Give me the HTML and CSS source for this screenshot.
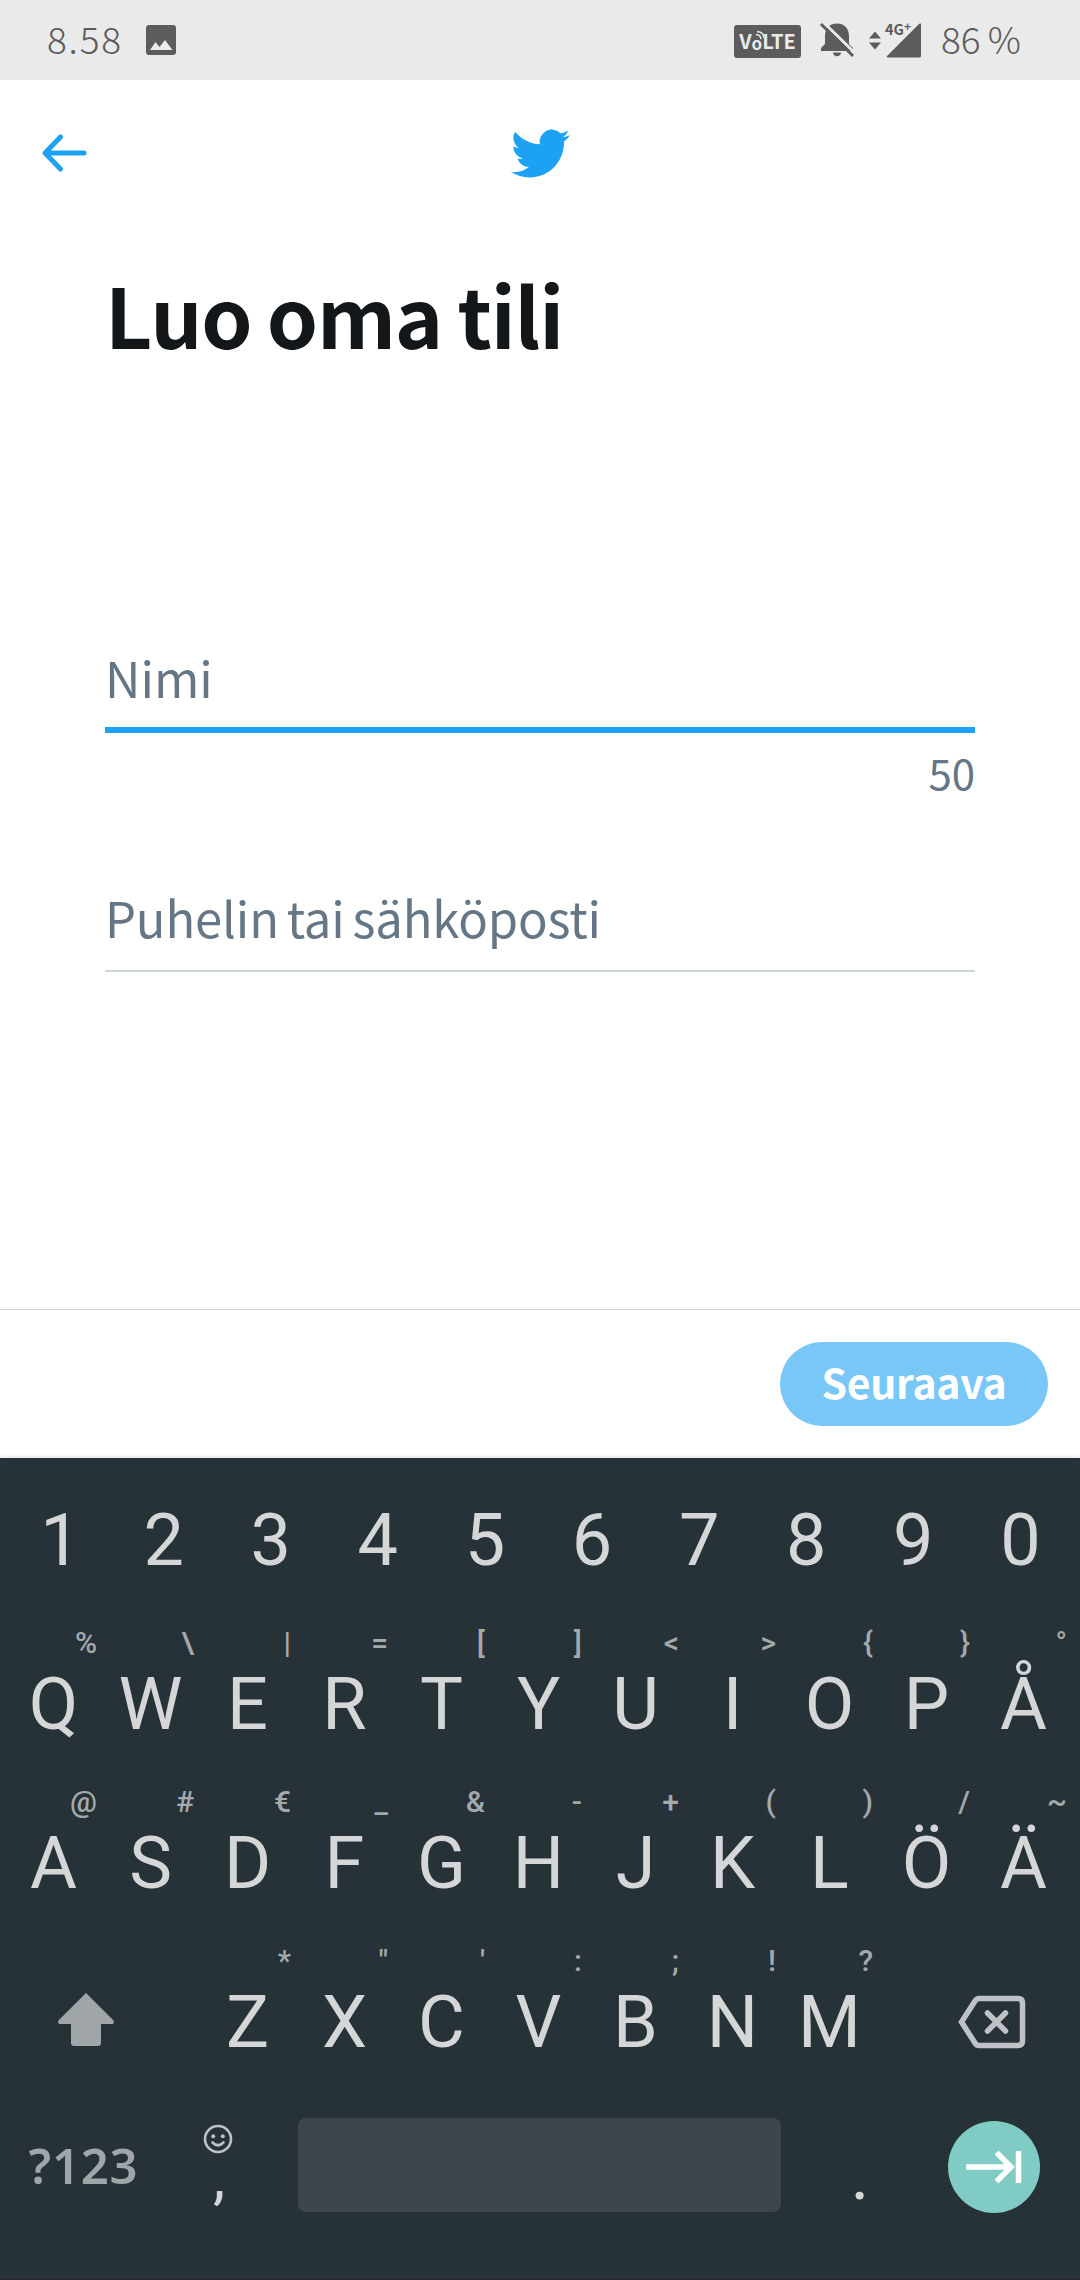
FILE: index.html
```html
<!DOCTYPE html>
<html lang="fi">
<head>
<meta charset="utf-8">
<title>Luo oma tili</title>
<link rel="stylesheet" href="styles.css">
</head>
<body>
<div class="screen">
  <div class="status">
    <span class="clock">8.58</span>
    <svg class="photo" width="30" height="30" viewBox="0 0 30 30"><rect width="30" height="30" rx="3"/><path class="cut" d="M4 25 9.500 17l4 5L19 15l7.500 10z"/></svg>
    <div class="status-right">
      <span class="volte">V<span class="volte-o">o<svg width="8" height="9" viewBox="0 0 8 9"><path d="M0 4q4-1 5 4M1 .8q6-.3 7 6"/></svg></span>LTE</span>
      <svg class="bell" width="36" height="36" viewBox="0 0 36 36"><path d="M2 29v-3l4-4V14C6 6 11 1.500 18 1.500S30 6 30 14v8l4 4v3zM14 30.500h8c0 5-8 5-8 0z"/><path class="gap" d="M3-1 37 32"/><path class="slash" d="M2 2 34 34"/></svg>
      <div class="signal">
        <svg width="54" height="36" viewBox="0 0 54 36"><path d="M1 16.500 7 9.500l6 7zM1 20.500h12l-6 7zM53 2.500V34a1.500 1.500 0 0 1-1.500 1.500H20c-1.500 0-1.500-1-.7-1.800L51 2c.8-.8 2-.8 2 .500z"/></svg>
        <span class="network">4G<sup>+</sup></span>
      </div>
      <span class="battery">86 %</span>
    </div>
  </div>

  <header class="topbar">
    <svg class="back" width="46" height="40" viewBox="0 0 46 40"><path d="M43 20H4.500M19.500 4 4 20l15.500 16"/></svg>
    <svg class="bird" width="59" height="59" viewBox="0 0 24 24"><path d="M23.953 4.570a10 10 0 0 1-2.825.775 4.958 4.958 0 0 0 2.163-2.723c-.951.555-2.005.959-3.127 1.184a4.920 4.920 0 0 0-8.384 4.482C7.690 8.095 4.067 6.130 1.640 3.162a4.822 4.822 0 0 0-.666 2.475c0 1.710.870 3.213 2.188 4.096a4.904 4.904 0 0 1-2.228-.616v.060a4.923 4.923 0 0 0 3.946 4.827 4.996 4.996 0 0 1-2.212.085 4.936 4.936 0 0 0 4.604 3.417 9.867 9.867 0 0 1-6.102 2.105c-.390 0-.779-.023-1.170-.067a13.995 13.995 0 0 0 7.557 2.209c9.053 0 13.998-7.496 13.998-13.985 0-.210 0-.420-.015-.630A9.935 9.935 0 0 0 24 4.590z"/></svg>
  </header>

  <main class="form">
    <h1>Luo oma tili</h1>
    <div class="field active">Nimi</div>
    <div class="counter">50</div>
    <div class="field"><span class="long">Puhelin tai sähköposti</span></div>
  </main>

  <footer class="actions"><button class="next">Seuraava</button></footer>

  <div class="keyboard">
    <div class="row digits">
      <div class="key one">1</div><div class="key">2</div><div class="key">3</div><div class="key">4</div><div class="key">5</div><div class="key">6</div><div class="key">7</div><div class="key">8</div><div class="key">9</div><div class="key">0</div>
    </div>
    <div class="row letters">
      <div class="key">Q<i>%</i></div><div class="key">W<i>\</i></div><div class="key">E<i>|</i></div><div class="key">R<i>=</i></div><div class="key">T<i>[</i></div><div class="key">Y<i>]</i></div><div class="key">U<i>&lt;</i></div><div class="key">I<i>&gt;</i></div><div class="key">O<i>{</i></div><div class="key">P<i>}</i></div><div class="key">Å<i>°</i></div>
    </div>
    <div class="row letters">
      <div class="key">A<i>@</i></div><div class="key">S<i>#</i></div><div class="key">D<i>€</i></div><div class="key">F<i>_</i></div><div class="key">G<i>&amp;</i></div><div class="key">H<i>-</i></div><div class="key">J<i>+</i></div><div class="key">K<i>(</i></div><div class="key">L<i>)</i></div><div class="key">Ö<i>/</i></div><div class="key">Ä<i>~</i></div>
    </div>
    <div class="row letters">
      <div class="key shift"><svg width="58" height="54" viewBox="0 0 58 54"><path d="M29 1 56.300 28.300c1.200 1.500.5 3.700-1.500 3.700H44v19a3 3 0 0 1-3 3H17a3 3 0 0 1-3-3V32H3.200C1.200 32 .5 29.800 1.700 28.300z"/></svg></div>
      <div class="key">Z<i>*</i></div><div class="key">X<i>"</i></div><div class="key">C<i>'</i></div><div class="key">V<i>:</i></div><div class="key">B<i>;</i></div><div class="key">N<i>!</i></div><div class="key">M<i>?</i></div>
      <div class="key erase"><svg width="68" height="54" viewBox="0 0 68 54"><path d="M21 3.500H60q4.500 0 4.500 4.500V46q0 4.500-4.500 4.500H21q-2.500 0-4-2.500L3.500 27 17 6q1.500-2.500 4-2.500zM29.500 18l18 18M47.500 18l-18 18"/></svg></div>
    </div>
    <div class="row bottom">
      <div class="symbols">?123</div>
      <div class="comma"><svg width="30" height="30" viewBox="0 0 30 30"><circle class="ring" cx="15" cy="15" r="13"/><circle cx="10.200" cy="12.200" r="2"/><circle cx="19.800" cy="12.200" r="2"/><path class="ring" d="M9.500 18.500q5.500 5.500 11 0"/></svg><span>,</span></div>
      <div class="space"></div>
      <div class="period">.</div>
      <div class="tab"><svg width="56" height="36" viewBox="0 0 56 36"><path d="M0 18h44M30.500 3.500 45 18 30.500 32.500M52.500 2v32"/></svg></div>
    </div>
  </div>
</div>
</body>
</html>
```

FILE: styles.css
```css
* { box-sizing: border-box; }

body {
  margin: 0;
  font-family: "Noto Sans CJK SC", "Noto Sans", sans-serif;
}

.screen {
  width: 1080px;
  height: 2280px;
  display: flex;
  flex-direction: column;
  background: #fff;
  overflow: hidden;
}

/* Status bar */
.status {
  height: 80px;
  padding: 0 59px 0 47px;
  display: flex;
  align-items: center;
  background: #eaeaea;
  color: #5c5c5c;
  fill: #5c5c5c;
}

.clock,
.battery {
  font-size: 37px;
  font-weight: 300;
  line-height: 50px;
  padding-bottom: 5px;
  white-space: nowrap;
}

.clock { width: 99px; letter-spacing: 1.8px; }
.battery { width: 80px; word-spacing: -1px; }
.photo .cut { fill: #eaeaea; }

.status-right {
  margin-left: auto;
  display: flex;
  align-items: center;
}

.volte {
  width: 67px;
  height: 33px;
  margin: 2px 18px 0 0;
  padding-bottom: 2px;
  display: flex;
  align-items: center;
  justify-content: center;
  border-radius: 3px;
  background: #5c5c5c;
  color: #eaeaea;
  font: 700 20px/31px "Noto Sans CJK SC", sans-serif;
}

.volte-o {
  position: relative;
  font-size: 17px;
  padding-top: 4px;
}

.volte-o svg {
  position: absolute;
  left: 4px;
  top: 8px;
  fill: none;
  stroke: #eaeaea;
  stroke-width: 1.5;
}

.bell { margin-right: 13px; }
.bell .gap { stroke: #eaeaea; stroke-width: 3; }
.bell .slash { stroke: #5c5c5c; stroke-width: 3; }

.signal {
  position: relative;
  display: flex;
  margin-right: 19px;
}

.network {
  position: absolute;
  left: 17px;
  top: -1px;
  font: 700 14.5px/16px "Noto Sans CJK SC", sans-serif;
}

.network sup {
  font-size: 12px;
  line-height: 0;
  vertical-align: 4px;
}

/* Header */
.topbar {
  height: 147px;
  padding: 0 41px 1px;
  display: grid;
  grid-template-columns: 1fr auto 1fr;
  align-items: center;
}

.back {
  fill: none;
  stroke: #1da1f2;
  stroke-width: 5;
  stroke-linecap: round;
  stroke-linejoin: round;
}

.bird { fill: #1da1f2; }

/* Form */
.form {
  flex: 1;
  padding: 37px 105px 0;
}

h1 {
  margin: 0 0 283px;
  font-size: 82px;
  font-weight: 700;
  line-height: 100px;
  letter-spacing: -1.2px;
  word-spacing: -2px;
  color: #14171a;
  white-space: nowrap;
}

.field {
  height: 85px;
  border-bottom: 2px solid #ccd6dd;
  color: #657786;
  font-size: 49px;
  line-height: 60px;
  white-space: nowrap;
}

.field.active {
  height: 86px;
  border-bottom: 6px solid #1da1f2;
}

.long {
  letter-spacing: -0.15px;
  word-spacing: -3px;
}

.counter {
  margin: 14px 0 90px;
  color: #657786;
  font-size: 42px;
  line-height: 50px;
  text-align: right;
}

.actions {
  height: 149px;
  padding: 32px 32px 0;
  display: flex;
  justify-content: flex-end;
  border-top: 1px solid #ccd6dd;
}

.next {
  width: 268px;
  height: 84px;
  padding: 0 0 6px;
  border: 0;
  border-radius: 42px;
  background: #78c7f7;
  color: #fff;
  font: 700 41px/78px "Noto Sans CJK SC", sans-serif;
  letter-spacing: -0.3px;
}

/* Keyboard */
.keyboard {
  height: 822px;
  background: #263238;
  box-shadow: 0 -1px 5px rgba(0, 0, 0, 0.12);
  border-bottom: 1px solid #2a2233;
  color: #d4d6d7;
  font-family: Roboto, sans-serif;
  font-size: 72px;
}

.row { display: grid; }

.digits {
  height: 167px;
  padding: 0 6px 2px 3px;
  grid-template-columns: repeat(10, 1fr);
}

.letters {
  height: 159px;
  padding: 0 8px 0 5px;
  grid-template-columns: repeat(11, 97px);
}

.key {
  position: relative;
  display: flex;
  align-items: center;
  justify-content: center;
}

.key.one { padding-left: 8px; }

.key i {
  position: absolute;
  top: 0;
  right: 5px;
  font-size: 30px;
  font-style: normal;
  font-weight: 500;
  line-height: 36px;
  color: #a4a9ac;
}

.shift,
.erase { grid-column: span 2; }

.shift { padding-right: 32px; fill: #a0a5a8; }
.shift svg { margin-top: -8px; }

.erase {
  padding-left: 34px;
  fill: none;
  stroke: #bec1c5;
  stroke-width: 5.5;
  stroke-linecap: round;
}

.erase svg { margin-top: -2px; }

.bottom {
  height: 126px;
  grid-template-columns: 167px 131px 483px 158px 1fr;
  align-items: center;
}

.symbols {
  padding-bottom: 1px;
  text-align: center;
  color: #a0a5a8;
  font: 600 49px/60px "Noto Sans", sans-serif;
  letter-spacing: 0.8px;
}

.comma {
  height: 94px;
  padding: 6px 0 0 36px;
  display: flex;
  flex-direction: column;
  fill: #bec1c5;
}

.comma .ring {
  fill: none;
  stroke: #bec1c5;
  stroke-width: 2.6;
  stroke-linecap: round;
}

.comma span {
  padding: 3px 0 0 10px;
  font-size: 62px;
  line-height: 40px;
}

.space {
  height: 94px;
  border-radius: 8px;
  background: #3c464b;
}

.period {
  text-align: center;
  line-height: 60px;
  padding-top: 19px;
}

.tab {
  width: 92px;
  height: 92px;
  margin: 4px 0 0 9px;
  display: flex;
  align-items: center;
  justify-content: center;
  border-radius: 50%;
  background: #80cbc4;
  fill: none;
  stroke: #fff;
  stroke-width: 5.5;
}
```
